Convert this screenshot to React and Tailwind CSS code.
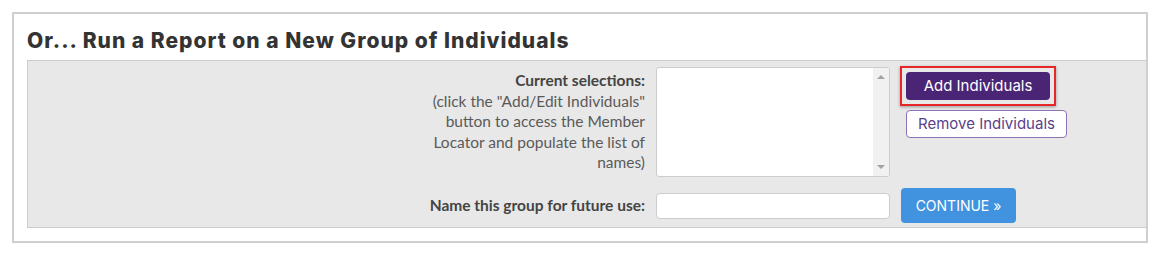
export default function App() {
  return (
    <div className="w-[1165px] h-[260px] bg-white pt-[12px] pl-[12px]">
      <div className="w-[1136px] h-[231px] border-2 border-[#cfcfcf] bg-white flex flex-col">
        <h2
          className="pl-[13px] pt-[13px] h-[46px] text-[21px] leading-[27px] font-extrabold text-[#333] tracking-[1px]"
          style={{ fontFamily: "Inter, 'Open Sans', sans-serif" }}
        >
          Or... Run a Report on a New Group of Individuals
        </h2>
        <div
          className="ml-[13px] h-[168px] border border-r-0 border-[#cccccc] bg-[#e8e8e8] pt-[6px] flex flex-col"
          style={{ fontFamily: "Lato, 'Liberation Sans', sans-serif" }}
        >
          <div className="flex items-start">
            <div className="w-[617px] pt-[3px] text-right text-[15.5px] leading-[20.5px] text-[#5a5a5a]">
              <div className="font-bold text-[#444]">Current selections:</div>
              <div>(click the "Add/Edit Individuals"</div>
              <div>button to access the Member</div>
              <div>Locator and populate the list of</div>
              <div>names)</div>
            </div>
            <div className="ml-[11px] w-[234px] h-[110px] bg-white border border-[#cccccc] rounded-[3px] flex justify-end overflow-hidden">
              <div className="w-[16px] h-full bg-[#f1f1f1] flex flex-col items-center justify-between py-[7px]">
                <div className="w-0 h-0 border-l-[4px] border-r-[4px] border-b-[4px] border-l-transparent border-r-transparent border-b-[#a3a3a3]" />
                <div className="w-0 h-0 border-l-[4px] border-r-[4px] border-t-[4px] border-l-transparent border-r-transparent border-t-[#a3a3a3]" />
              </div>
            </div>
            <div
              className="ml-[10px] -mt-[1px] flex flex-col items-start"
              style={{ fontFamily: "Inter, 'Open Sans', sans-serif" }}
            >
              <div className="border-2 border-[#e8262a] p-[4px] shadow-[0_1px_3px_rgba(0,0,0,0.35)]">
                <button className="w-[144px] h-[28px] rounded-[4px] bg-[#4a2576] text-white text-[15px] leading-[28px] text-center">
                  Add Individuals
                </button>
              </div>
              <button className="ml-[6px] mt-[4px] w-[161px] h-[28px] rounded-[4px] bg-white border border-[#8c73b5] text-[#5b3f8a] text-[15px] leading-[26px] text-center">
                Remove Individuals
              </button>
            </div>
          </div>
          <div className="flex items-center mt-[11px]">
            <div className="w-[617px] text-right text-[15.5px] font-bold text-[#444]">
              Name this group for future use:
            </div>
            <div className="ml-[11px] w-[234px] h-[26px] bg-white border border-[#cccccc] rounded-[4px]" />
            <button
              className="ml-[11px] w-[115px] h-[35px] rounded-[4px] bg-[#4193e0] text-white text-[14px] text-center"
              style={{ fontFamily: "Inter, 'Open Sans', sans-serif" }}
            >
              CONTINUE »
            </button>
          </div>
        </div>
      </div>
    </div>
  );
}
